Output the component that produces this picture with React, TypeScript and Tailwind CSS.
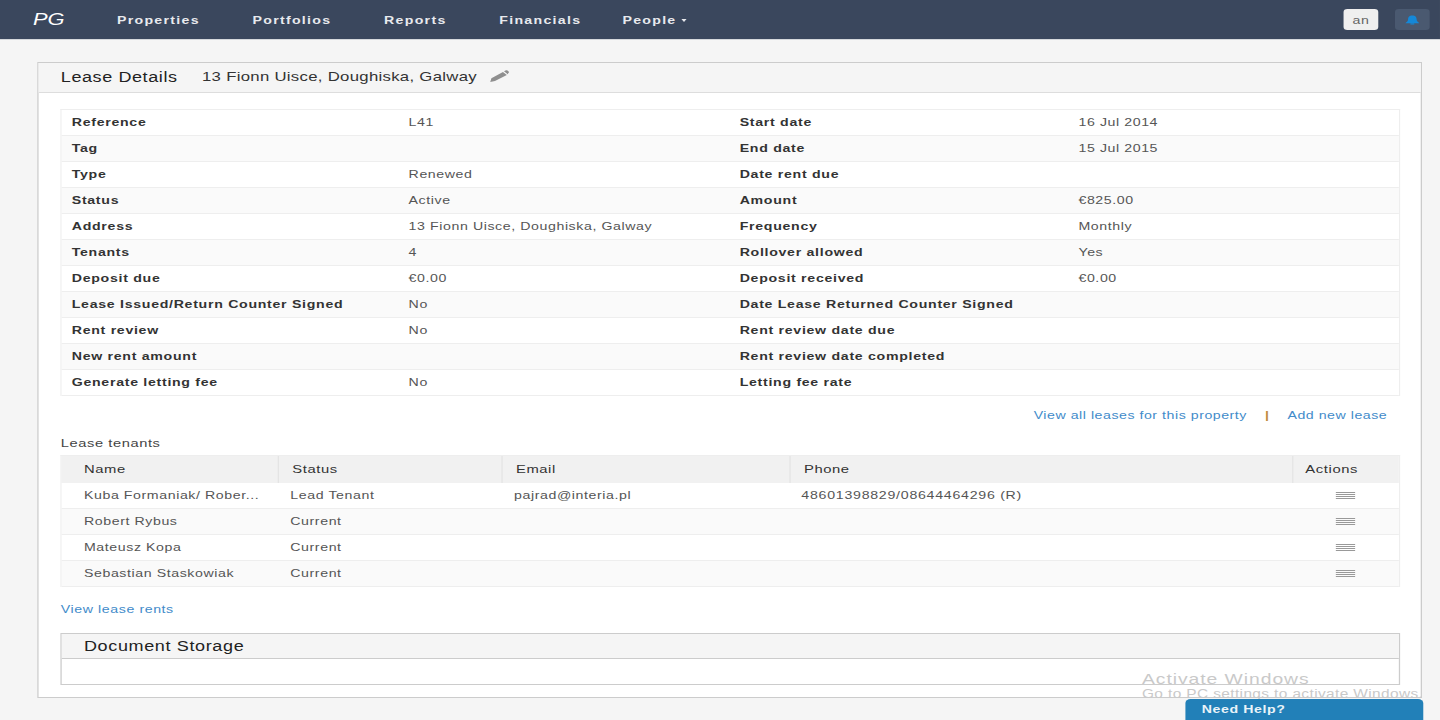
import React from "react";

const left = [
  ["Reference", "L41"], ["Tag", ""], ["Type", "Renewed"], ["Status", "Active"],
  ["Address", "13 Fionn Uisce, Doughiska, Galway"], ["Tenants", "4"], ["Deposit due", "€0.00"],
  ["Lease Issued/Return Counter Signed", "No"], ["Rent review", "No"], ["New rent amount", ""], ["Generate letting fee", "No"],
];
const right = [
  ["Start date", "16 Jul 2014"], ["End date", "15 Jul 2015"], ["Date rent due", ""], ["Amount", "€825.00"],
  ["Frequency", "Monthly"], ["Rollover allowed", "Yes"], ["Deposit received", "€0.00"],
  ["Date Lease Returned Counter Signed", ""], ["Rent review date due", ""], ["Rent review date completed", ""], ["Letting fee rate", ""],
];
const tenants = [
  ["Kuba Formaniak/ Rober...", "Lead Tenant", "pajrad@interia.pl", "48601398829/08644464296 (R)"],
  ["Robert Rybus", "Current", "", ""],
  ["Mateusz Kopa", "Current", "", ""],
  ["Sebastian Staskowiak", "Current", "", ""],
];
const cols = "grid grid-cols-[168px_174px_224px_390.5px_1fr]";

export default function App() {
  return (
    <div className="h-[720px] w-[1440px] overflow-hidden bg-[#f5f5f5]">
      <div className="relative h-[720px] w-[1120px] origin-top-left scale-x-[1.2857] bg-[#f5f5f5] font-['Liberation_Sans',Arial,sans-serif] text-[11px] leading-[18px] tracking-[0.46px] text-[#555]">
        <nav className="flex h-[40px] items-center border-b border-[#d5d8dc] bg-[#3a475d] pl-[25.7px] pr-[8.5px]">
          <span className="mr-[42px] w-[23.3px] text-[17px] font-medium italic leading-none tracking-normal text-white">PG</span>
          <div className="mt-[1px] flex items-center gap-[41px] text-[11px] font-bold tracking-[1px] text-[#e8eaee]">
            <span>Properties</span><span>Portfolios</span><span>Reports</span><span>Financials</span>
            <span className="-ml-[9px] flex items-center gap-[4px]">People<span className="mt-[1px] border-x-[2.5px] border-t-[3px] border-x-transparent border-t-[#e8eaee]" /></span>
          </div>
          <div className="ml-auto flex items-center gap-[13px]">
            <div className="flex h-[21px] w-[27px] items-center justify-center rounded-[3px] bg-[#efefef] text-[11px] text-[#666]">an</div>
            <div className="flex h-[21px] w-[26.5px] items-center justify-center rounded-[3px] bg-[#4a5970]">
              <svg width="11" height="10" viewBox="0 0 11 10" fill="#1488d8"><path d="M5.5 .5C3 .5 2.2 2.2 2.2 4.2C2.2 6 1.2 7 0 8.2H11C9.8 7 8.8 6 8.8 4.2C8.8 2.2 8 .5 5.5 .5ZM4 8.6H7V9.6H4Z" /></svg>
            </div>
          </div>
        </nav>

        <main className="ml-[29.3px] mt-[22px] h-[636px] w-[1076.7px] border border-[#ccc] bg-white">
          <div className="flex h-[30px] items-center border-b border-[#ddd] bg-[#f5f5f5] pb-[1px] pl-[17px] text-[#333]">
            <span className="text-[14px] tracking-[0.46px] text-[#222]">Lease Details</span>
            <span className="ml-[19px] text-[13px] tracking-[0.24px]">13 Fionn Uisce, Doughiska, Galway</span>
            <svg className="ml-[10px] mb-[2px]" width="15" height="12" viewBox="0 0 15 12" fill="#8f8f8f"><path d="M0.3 12L1.2 8.2L10.2 1.9L13.2 4.9L4 11ZM11 1.3L12.2 .5C12.9 .1 13.6 .2 14.1 .8L14.6 1.4C15 2 14.9 2.6 14.4 3L13.9 4.2Z" /></svg>
          </div>

          <div className="pl-[17px] pr-[16px] pt-[16px]">
            <div className="border-x border-t border-[#eee]">
              {left.map((row, i) => (
                <div key={row[0]} className={`grid h-[26px] grid-cols-[262px_257.5px_263.5px_1fr] items-center border-b border-[#eee] pb-[1px] ${i % 2 ? "bg-[#fafafa]" : "bg-white"}`}>
                  <span className="pl-[7.5px] font-bold tracking-[0.55px] text-[#333]">{row[0]}</span>
                  <span className="pl-[7.5px]">{row[1]}</span>
                  <span className="pl-[7.5px] font-bold tracking-[0.55px] text-[#333]">{right[i][0]}</span>
                  <span className="pl-[7.5px]">{right[i][1]}</span>
                </div>
              ))}
            </div>

            <div className="mt-[10px] flex justify-end pr-[10px] tracking-[0.42px] text-[#428bca]">
              <span>View all leases for this property</span>
              <span className="mx-[14px] font-bold text-[#c08a3e]">|</span>
              <span>Add new lease</span>
            </div>

            <div className="mt-[10px] text-[11.4px] text-[#444]">Lease tenants</div>
            <div className="mt-[3px] border-x border-t border-[#eee]">
              <div className={`${cols} h-[27px] items-center bg-[#f1f1f1] text-[11.5px] text-[#333]`}>
                <span className="pb-[2px] pl-[17px]">Name</span>
                <span className="flex h-full items-center border-l border-[#e4e4e4] pb-[2px] pl-[10px]">Status</span>
                <span className="flex h-full items-center border-l border-[#e4e4e4] pb-[2px] pl-[10px]">Email</span>
                <span className="flex h-full items-center border-l border-[#e4e4e4] pb-[2px] pl-[10px]">Phone</span>
                <span className="flex h-full items-center border-l border-[#e4e4e4] pb-[2px] pl-[9.5px]">Actions</span>
              </div>
              {tenants.map((t, i) => (
                <div key={t[0]} className={`${cols} h-[26px] items-center border-b border-[#eee] ${i % 2 ? "bg-[#fafafa]" : "bg-white"}`}>
                  <span className="whitespace-nowrap pb-[1px] pl-[17px]">{t[0]}</span>
                  <span className="pb-[1px] pl-[9.5px]">{t[1]}</span>
                  <span className="pb-[1px] pl-[9.5px]">{t[2]}</span>
                  <span className="pb-[1px] pl-[9px] tracking-[0.58px]">{t[3]}</span>
                  <span className="flex flex-col gap-[1px] pl-[34px]">
                    <i className="block h-[1px] w-[15.5px] bg-[#999]" />
                    <i className="block h-[1px] w-[15.5px] bg-[#999]" />
                    <i className="block h-[1px] w-[15.5px] bg-[#999]" />
                    <i className="block h-[1px] w-[15.5px] bg-[#999]" />
                  </span>
                </div>
              ))}
            </div>

            <div className="mt-[13px] text-[#428bca]">View lease rents</div>

            <div className="mt-[15px] border border-[#ccc]">
              <div className="flex h-[25px] items-center border-b border-[#ccc] bg-[#f5f5f5] pb-[1px] pl-[17px] text-[14px] tracking-[0.5px] text-[#222]">Document Storage</div>
              <div className="h-[25px]" />
            </div>
          </div>
        </main>

        <div className="pointer-events-none absolute left-[888.2px] top-[670px] whitespace-nowrap text-[#c9c9c9]">
          <div className="text-[15px] leading-[18px] tracking-[0.75px]">Activate Windows</div>
          <div className="-mt-[1px] text-[12px] leading-[14px] tracking-[0.3px]">Go to PC settings to activate Windows.</div>
        </div>

        <div className="absolute left-[921.7px] top-[699px] flex h-[21px] w-[185px] items-center rounded-t-[4px] bg-[#2280b8] pb-[1px] pl-[13px] font-bold text-[#eaf3f9]">Need Help?</div>
      </div>
    </div>
  );
}
